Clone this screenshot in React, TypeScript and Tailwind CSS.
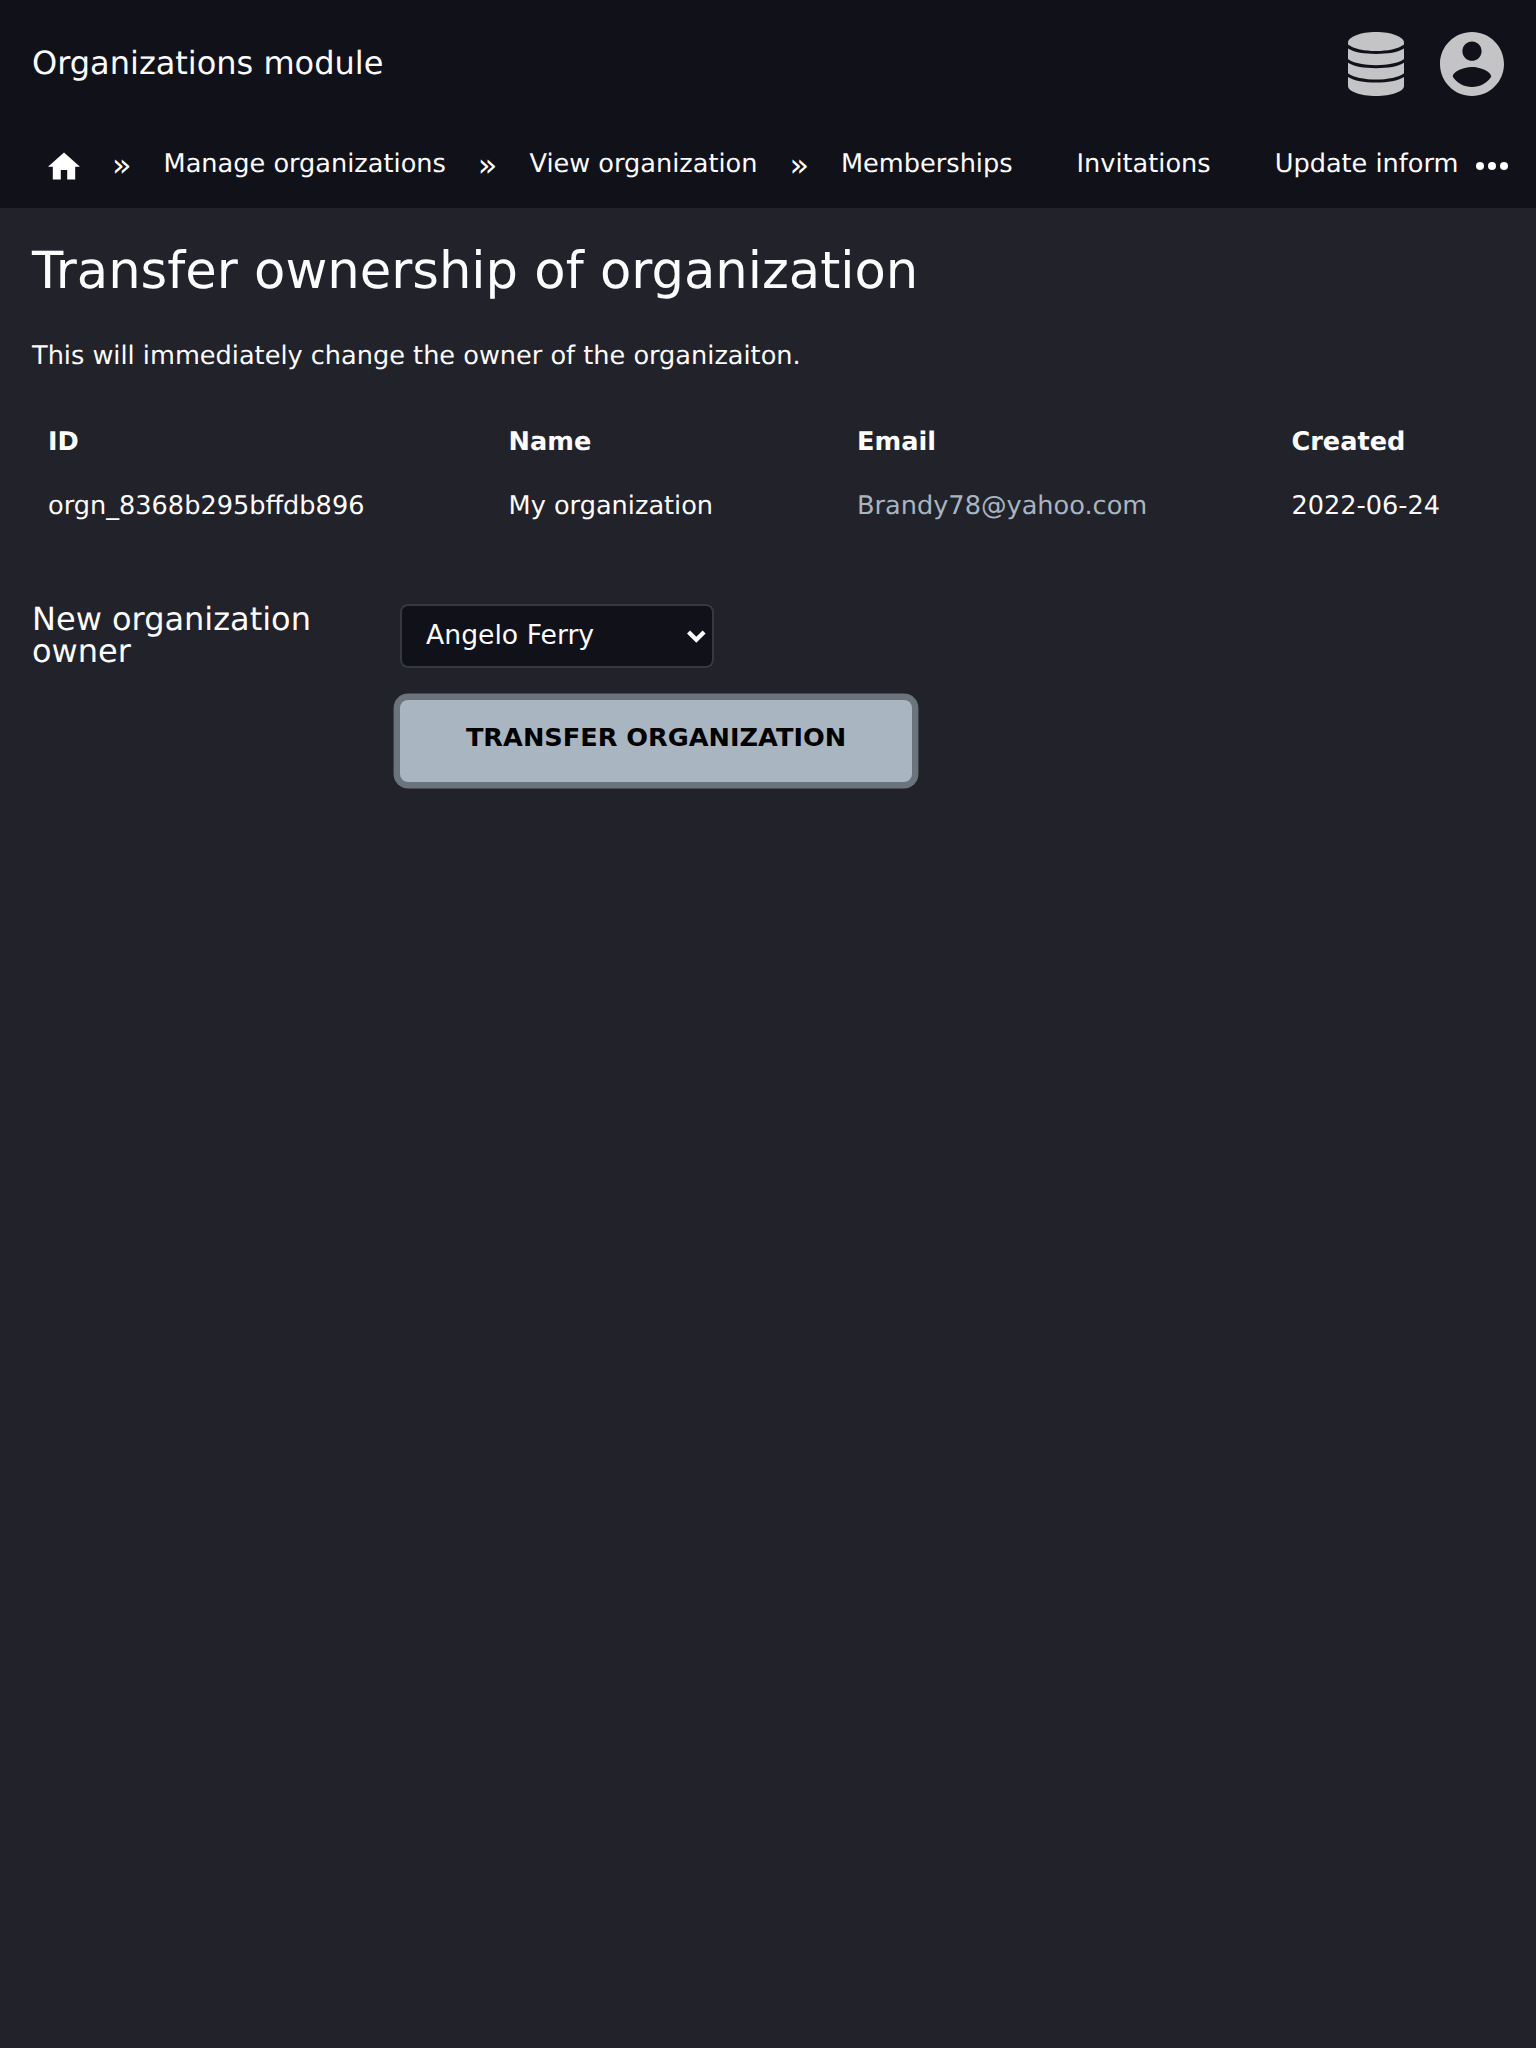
import React from "react";

function Crumb() {
  return <span className="mx-8 mt-px shrink-0 text-[32px]">»</span>;
}

const columns = [
  { title: "ID", width: "w-[460.6px]", value: "orgn_8368b295bffdb896" },
  { title: "Name", width: "w-[348.4px]", value: "My organization" },
  { title: "Email", width: "w-[434.4px]", value: "Brandy78@yahoo.com", link: true },
  { title: "Created", width: "w-[228.6px]", value: "2022-06-24" },
];

function DatabaseIcon() {
  return (
    <svg viewBox="0 0 56 64" className="h-16 w-14 fill-[#c4c4c7]">
      <path d="M28 0C43.500 0 56 5 56 10.500V12.500C50 17 39.500 19 28 19S6 17 0 12.500V10.500C0 5 12.500 0 28 0Z" />
      <path d="M0 16.600C6 20.500 16 22 28 22S50 20.500 56 16.600V27C51 31 39.500 33.200 28 33.200S5 31 0 27Z" />
      <path d="M0 30.800C6 34.700 16 36.200 28 36.200S50 34.700 56 30.800V41.200C51 45.200 39.500 47.500 28 47.500S5 45.200 0 41.200Z" />
      <path d="M0 45C6 48.900 16 50.500 28 50.500S50 48.900 56 45V54C56 59.500 43.500 64 28 64S0 59.500 0 54Z" />
    </svg>
  );
}

function AccountIcon() {
  return (
    <svg viewBox="2 2 20 20" className="h-16 w-16 fill-[#c4c4c7]">
      <path d="M12 2C6.480 2 2 6.480 2 12s4.480 10 10 10 10-4.480 10-10S17.520 2 12 2zm0 3c1.660 0 3 1.340 3 3s-1.340 3-3 3-3-1.340-3-3 1.340-3 3-3zm0 14.200c-2.500 0-4.710-1.280-6-3.220.030-1.990 4-3.080 6-3.080 1.990 0 5.970 1.090 6 3.080-1.290 1.940-3.500 3.220-6 3.220z" />
    </svg>
  );
}

export default function App() {
  return (
    <div className="flex h-[2048px] w-[1536px] flex-col overflow-hidden bg-[#22222a] font-['DejaVu_Sans',sans-serif] text-[25.6px] leading-[32px] text-[#fcfcff] [text-rendering:geometricPrecision]">
      <header className="h-[208px] bg-[#11111a]">
        <div className="flex h-[128px] items-center justify-between px-8">
          <h2 className="-mt-0.5 text-[32px]">Organizations module</h2>
          <div className="flex items-center gap-9">
            <DatabaseIcon />
            <AccountIcon />
          </div>
        </div>
        <nav className="flex h-[80px] items-start pt-5 pr-6 pl-12 whitespace-nowrap">
          <svg viewBox="2 2.75 20 17.5" className="mt-1 h-7 w-8 shrink-0 fill-white">
            <path d="M10 20v-6h4v6h5v-8h3L12 3 2 12h3v8z" />
          </svg>
          <Crumb />
          <span>Manage organizations</span>
          <Crumb />
          <span>View organization</span>
          <Crumb />
          <span>Memberships</span>
          <span className="ml-16">Invitations</span>
          <span className="ml-16">Update inform</span>
          <svg viewBox="0 0 24 24" className="-mr-1 -mt-1.5 ml-auto size-12 shrink-0 fill-white">
            <circle cx="6" cy="12" r="2" />
            <circle cx="12" cy="12" r="2" />
            <circle cx="18" cy="12" r="2" />
          </svg>
        </nav>
      </header>
      <main className="px-8">
        <h1 className="mt-[33px] text-[51.2px] leading-[60px]">Transfer ownership of organization</h1>
        <p className="mt-[39px]">This will immediately change the owner of the organizaiton.</p>
        <table className="mt-[38px] w-full table-fixed text-left">
          <thead>
            <tr className="h-16">
              {columns.map((c) => (
                <th key={c.title} className={`${c.width} px-4 font-bold`}>{c.title}</th>
              ))}
            </tr>
          </thead>
          <tbody>
            <tr className="h-16">
              {columns.map((c) => (
                <td key={c.title} className={c.link ? "px-4 text-[#a9b5c0]" : "px-4"}>{c.value}</td>
              ))}
            </tr>
          </tbody>
        </table>
        <form className="mt-[66px] flex" onSubmit={(e) => e.preventDefault()}>
          <label className="mt-[-1px] w-[368px] text-[32px] leading-[32px]">
            New organization
            <br />
            owner
          </label>
          <div>
            <div className="relative h-16 w-[313.5px] rounded-lg border-2 border-[#353942] bg-[#11111a]">
              <select className="h-full w-full appearance-none bg-transparent pb-0.5 pl-6 text-[26.67px] outline-none">
                <option>Angelo Ferry</option>
              </select>
              <svg viewBox="0 0 19 13" className="pointer-events-none absolute top-6 right-1.5 h-[13px] w-[19px] fill-none stroke-current stroke-[4.3]">
                <path d="M1.500 2 9.300 9.800 17.100 2" />
              </svg>
            </div>
            <button className="mt-8 h-[82px] w-[512px] rounded-lg bg-[#a9b5c0] pb-[9px] font-bold text-black ring-[6.4px] ring-[#6b747d]">
              TRANSFER ORGANIZATION
            </button>
          </div>
        </form>
      </main>
    </div>
  );
}
